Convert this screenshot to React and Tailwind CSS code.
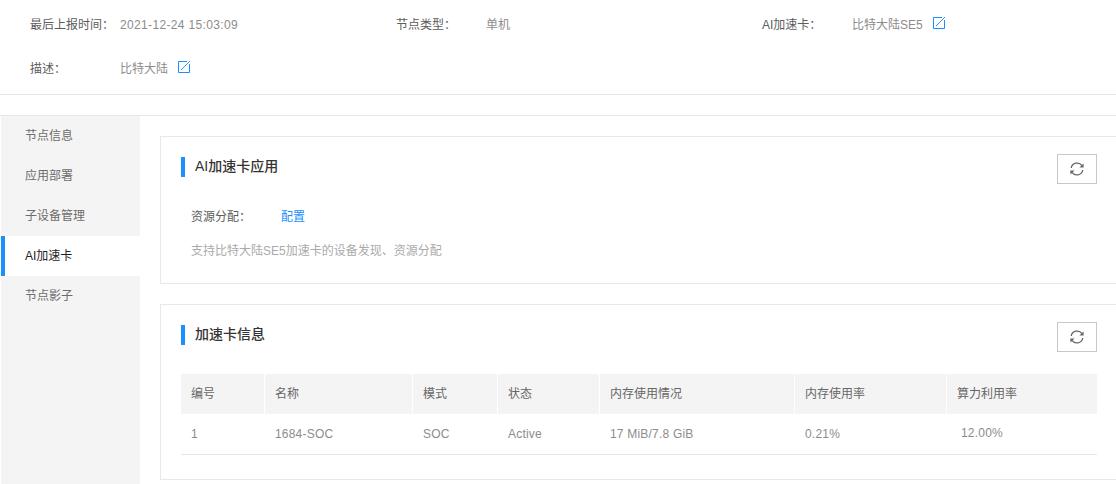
import React from 'react';

const menu = ['节点信息', '应用部署', '子设备管理', 'AI加速卡', '节点影子'];

const columns = [
  { title: '编号', value: '1', width: 'w-[84px]' },
  { title: '名称', value: '1684-SOC', width: 'w-[148px]' },
  { title: '模式', value: 'SOC', width: 'w-[85px]' },
  { title: '状态', value: 'Active', width: 'w-[102px]' },
  { title: '内存使用情况', value: '17 MiB/7.8 GiB', width: 'w-[195px]' },
  { title: '内存使用率', value: '0.21%', width: 'w-[152px]' },
  { title: '算力利用率', value: '12.00%', width: 'w-[150px]' },
];

function EditIcon() {
  return (
    <svg width="12" height="12" viewBox="0 0 12 12" fill="none" className="ml-[10px] shrink-0 -translate-y-[2px]">
      <path d="M9 .5H.5v11h11V3" stroke="#1890ff" strokeWidth="1" />
      <path d="M3 9 12 0" stroke="#1890ff" strokeWidth="0.9" />
    </svg>
  );
}

function RefreshButton() {
  return (
    <button className="flex h-[30px] w-10 items-center justify-center border border-[#c8c8c8] bg-white">
      <svg width="16" height="16" viewBox="0 0 16 16" fill="none">
        <path d="M2.2 7A6 6 0 0 1 13 4.6" stroke="#666" strokeWidth="1.3" />
        <path d="M13.8 9A6 6 0 0 1 3 11.4" stroke="#666" strokeWidth="1.3" />
        <path d="M14.6 2.4v4.2h-4.2z" fill="#666" />
        <path d="M1.4 13.6V9.4h4.2z" fill="#666" />
      </svg>
    </button>
  );
}

function InfoItem({ label, children }) {
  return (
    <div className="flex items-center">
      <span className="w-[90px] text-[#5c5c5c]">{label}</span>
      <span className="text-[#8c8c8c]">{children}</span>
    </div>
  );
}

function CardTitle({ children }) {
  return (
    <div className="flex items-start justify-between">
      <h3 className="mt-[3px] h-5 border-l-4 border-[#1890ff] pl-[10px] text-sm leading-[18px] font-medium text-[#333]">{children}</h3>
      <RefreshButton />
    </div>
  );
}

export default function App() {
  return (
    <div className="h-[484px] w-[1116px] overflow-hidden bg-white font-['Liberation_Sans','Noto_Sans_CJK_SC',sans-serif] text-xs">
      {/* Header */}
      <div className="grid h-[95px] grid-cols-[366px_366px_354px] grid-rows-[44px_44px] border-b border-[#e8e8e8] pt-[3px] pl-[30px]">
        <InfoItem label="最后上报时间：">
          <span className="tracking-[0.35px]">2021-12-24 15:03:09</span>
        </InfoItem>
        <InfoItem label="节点类型：">单机</InfoItem>
        <InfoItem label="AI加速卡：">
          <span className="flex items-center">比特大陆SE5<EditIcon /></span>
        </InfoItem>
        <InfoItem label="描述：">
          <span className="flex items-center">比特大陆<EditIcon /></span>
        </InfoItem>
      </div>

      <div className="mt-5 flex border-t border-[#e8e8e8]">
        {/* Sidebar */}
        <ul className="ml-px h-[368px] w-[139px] shrink-0 bg-[#f4f4f4]">
          {menu.map((item) => (
            <li
              key={item}
              className={
                item === 'AI加速卡'
                  ? 'flex h-10 items-center border-l-4 border-[#1890ff] bg-white pl-5 text-[#222]'
                  : 'flex h-10 items-center pl-6 text-[#6c6c6c]'
              }
            >
              {item}
            </li>
          ))}
        </ul>

        <div className="ml-5 w-[958px] shrink-0 space-y-5 pt-5">
          {/* AI加速卡应用 */}
          <div className="h-[148px] border border-[#e8e8e8] px-5 pt-[17px]">
            <CardTitle>AI加速卡应用</CardTitle>
            <div className="mt-[23px] flex pl-[10px] leading-5">
              <span className="w-[90px] text-[#5c5c5c]">资源分配：</span>
              <a className="text-[#1890ff]">配置</a>
            </div>
            <p className="mt-[14px] pl-[10px] leading-5 text-[#aaa]">支持比特大陆SE5加速卡的设备发现、资源分配</p>
          </div>

          {/* 加速卡信息 */}
          <div className="h-[176px] border border-[#e8e8e8] px-5 pt-[17px]">
            <CardTitle>加速卡信息</CardTitle>
            <table className="mt-[22px] w-[916px] table-fixed border-separate border-spacing-0 text-left">
              <thead>
                <tr className="h-10 bg-[#f4f4f4] text-[#666]">
                  {columns.map((col, i) => (
                    <th key={col.title} className={`${col.width} ${i < columns.length - 1 ? 'border-r border-white' : ''} pl-[10px] font-normal`}>
                      {col.title}
                    </th>
                  ))}
                </tr>
              </thead>
              <tbody>
                <tr className="h-[41px] text-[#8c8c8c] tracking-[0.2px]">
                  {columns.map((col) => (
                    <td key={col.title} className={col.value === '12.00%' ? 'border-b border-[#e8e8e8] pb-[3px] pl-[14px]' : 'border-b border-[#e8e8e8] pl-[10px]'}>
                      {col.value}
                    </td>
                  ))}
                </tr>
              </tbody>
            </table>
          </div>
        </div>
      </div>
    </div>
  );
}
